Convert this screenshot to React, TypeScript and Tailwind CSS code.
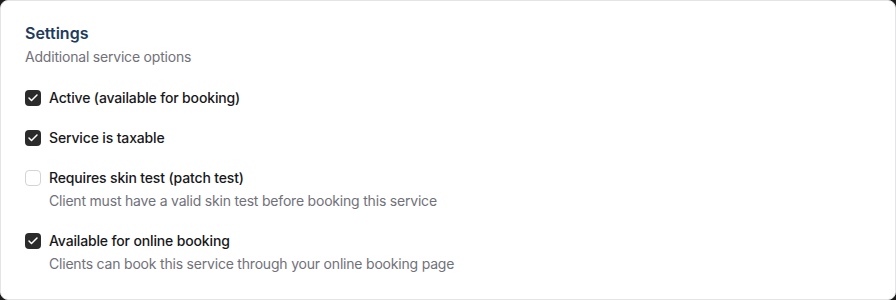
import React from "react";

function Check({ checked }: { checked: boolean }) {
  return checked ? (
    <span className="flex h-4 w-4 shrink-0 items-center justify-center rounded-[4px] bg-[#2b2b2b]">
      <svg viewBox="0 0 24 24" className="h-3 w-3" fill="none" stroke="white" strokeWidth={3} strokeLinecap="round" strokeLinejoin="round">
        <path d="M20 6 9 17l-5-5" />
      </svg>
    </span>
  ) : (
    <span className="h-4 w-4 shrink-0 rounded-[4px] border border-[#d4d4d8] bg-white" />
  );
}

const items = [
  { label: "Active (available for booking)", checked: true },
  { label: "Service is taxable", checked: true },
  { label: "Requires skin test (patch test)", checked: false, desc: "Client must have a valid skin test before booking this service" },
  { label: "Available for online booking", checked: true, desc: "Clients can book this service through your online booking page" },
];

export default function App() {
  return (
    <div className="h-[300px] w-[896px] bg-[#1c1c1c]" style={{ fontFamily: "Inter, 'Noto Sans', sans-serif" }}>
      <div className="h-[300px] rounded-lg border border-[#e4e4e7] bg-white px-6 pt-6">
        <div className="text-base font-semibold leading-none text-[#1e3a5c]">Settings</div>
        <div className="mt-1.5 text-sm leading-5 tracking-[-0.2px] text-[#71717a]">Additional service options</div>
        <div className="mt-[21px] flex flex-col gap-5">
          {items.map((it) => (
            <div key={it.label}>
              <div className="flex items-center gap-2">
                <Check checked={it.checked} />
                <span className="text-sm font-medium leading-5 tracking-[-0.15px] text-[#18181b]">{it.label}</span>
              </div>
              {it.desc && <div className="mt-[3px] pl-6 text-sm leading-5 tracking-[-0.2px] text-[#71717a]">{it.desc}</div>}
            </div>
          ))}
        </div>
      </div>
    </div>
  );
}
